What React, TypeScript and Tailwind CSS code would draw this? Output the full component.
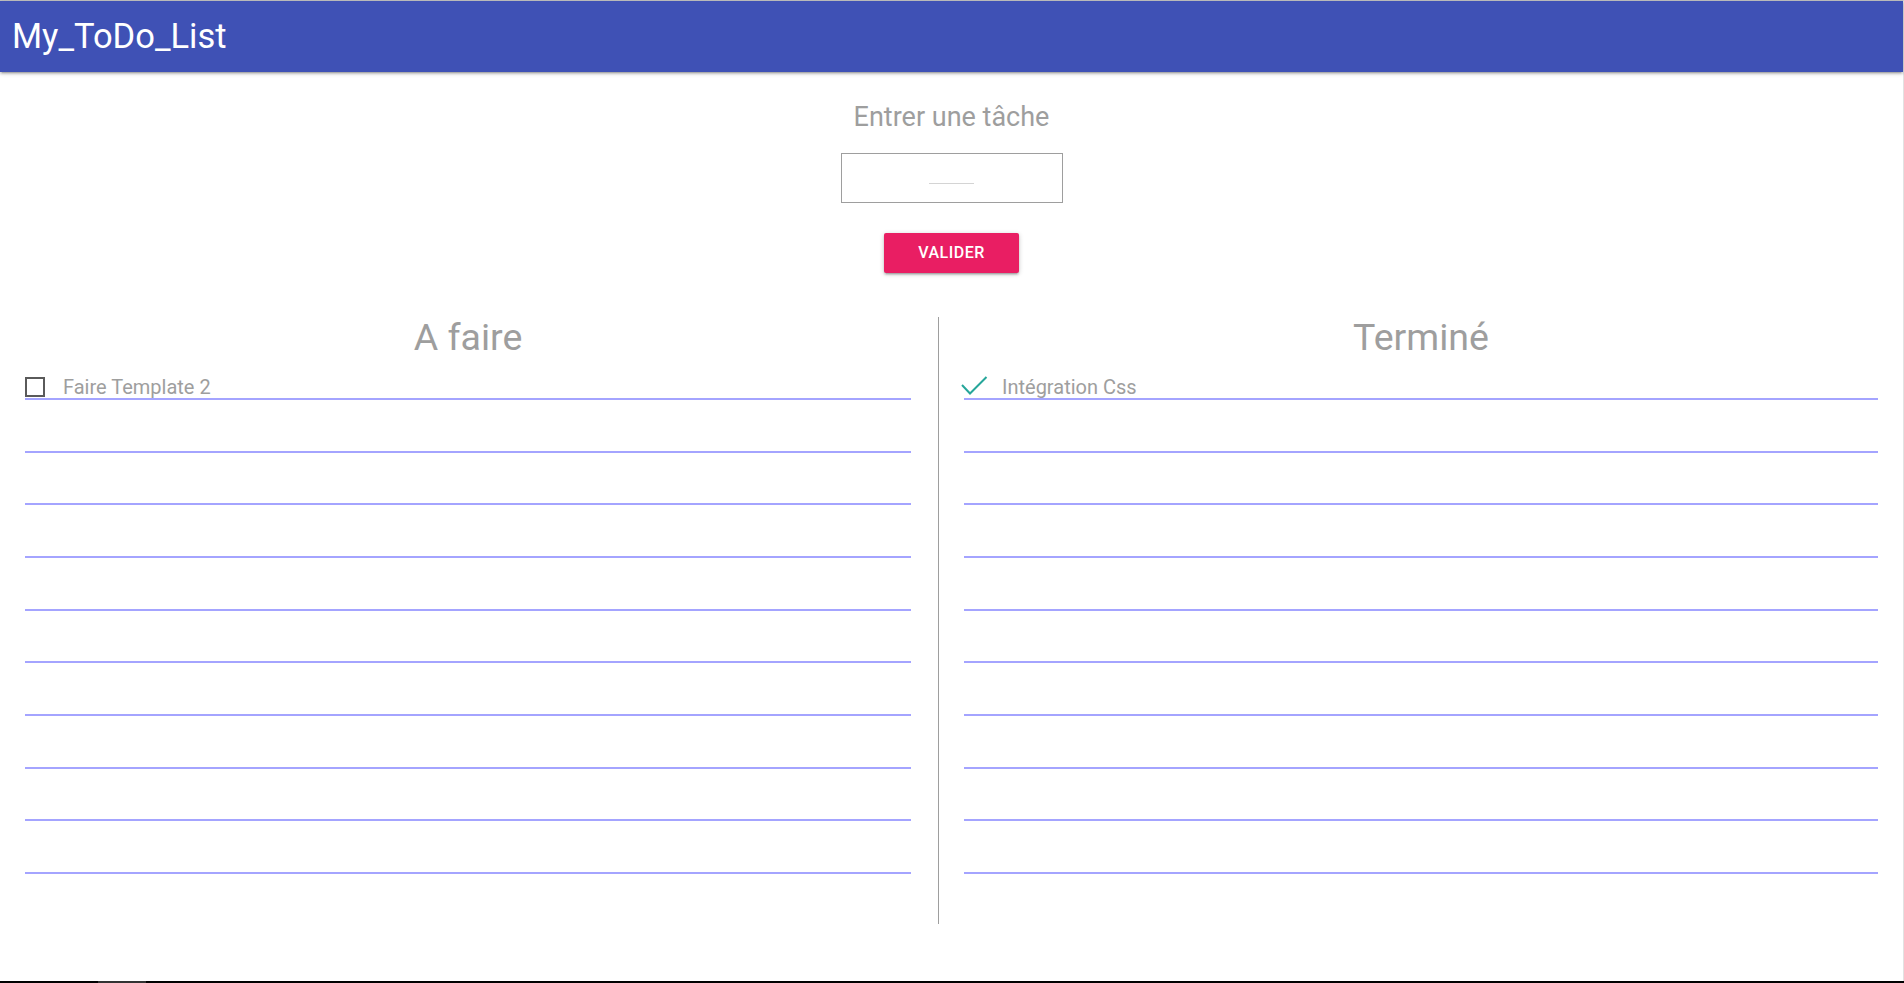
import React, { useState } from 'react';

const font = { fontFamily: 'Roboto, "Noto Sans", sans-serif' };

const App: React.FC = () => {
  const [task, setTask] = useState('');
  const todo = ['Faire Template 2'];
  const done = ['Intégration Css'];
  const rows = 10;

  const renderRows = (items: string[], checked: boolean) =>
    Array.from({ length: rows }).map((_, i) => (
      <div
        key={i}
        className={`relative flex items-end border-b-2 border-[#a4a4ff] ${i === 0 ? 'h-[43.5px]' : 'h-[52.67px]'}`}
      >
        {items[i] && (
          <>
            {checked ? (
              <svg className="absolute left-[-3px] bottom-[2px]" width="28" height="20" viewBox="0 0 28 20">
                <polyline points="1,9 9,17.5 25.5,1" fill="none" stroke="#26a69a" strokeWidth="2" />
              </svg>
            ) : (
              <span className="absolute left-0 bottom-[1px] w-[20px] h-[20px] border-2 border-[#5a5a5a]" />
            )}
            <span className="pl-[38px] text-[20px] leading-[21px] text-[#9e9e9e]">{items[i]}</span>
          </>
        )}
      </div>
    ));

  return (
    <div className="h-screen flex flex-col bg-white" style={font}>
      <div className="flex-1 flex flex-col border-r border-[#e2e2e2] border-t border-t-[#c4c4c4]">
        <header className="h-[71px] bg-[#3f51b5] flex items-center pl-[12px] shadow-[0_2px_2px_0_rgba(0,0,0,0.14),0_3px_1px_-2px_rgba(0,0,0,0.12),0_1px_5px_0_rgba(0,0,0,0.2)]">
          <h1 className="text-white text-[34.5px] leading-none">My_ToDo_List</h1>
        </header>

        <div className="flex flex-col items-center">
          <h5 className="mt-[31px] text-[27px] leading-[28.6px] text-[#9e9e9e]">Entrer une tâche</h5>
          <div className="mt-[21px] w-[222px] h-[50px] border border-[#9e9e9e] flex items-center justify-center">
            <input
              value={task}
              onChange={(e) => setTask(e.target.value)}
              className="w-[45px] mb-[8px] h-[20px] border-b border-[#d4d4d4] outline-none text-center"
            />
          </div>
          <button className="mt-[30px] w-[135px] h-[40px] rounded-[2px] bg-[#e91e63] text-white text-[16px] font-medium tracking-[0.5px] shadow-[0_2px_2px_0_rgba(0,0,0,0.14),0_3px_1px_-2px_rgba(0,0,0,0.12),0_1px_5px_0_rgba(0,0,0,0.2)]">
            VALIDER
          </button>
        </div>

        <div className="mt-[44px] flex px-[25px]">
          <div className="w-[886px]">
            <h4 className="text-center text-[37.5px] leading-[40px] text-[#9e9e9e]">A faire</h4>
            {renderRows(todo, false)}
          </div>
          <div className="ml-[27px] mr-[25px] w-px h-[607px] bg-[#9e9e9e]" />
          <div className="flex-1">
            <h4 className="text-center text-[37.5px] leading-[40px] text-[#9e9e9e]">Terminé</h4>
            {renderRows(done, true)}
          </div>
        </div>
      </div>
      <div className="h-[2px] bg-black flex">
        <div className="ml-[98px] w-[48px] bg-[#333]" />
      </div>
    </div>
  );
};

export default App;
